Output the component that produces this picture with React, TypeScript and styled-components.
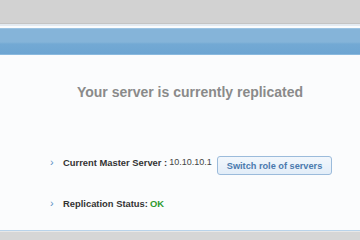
import React from 'react';
import styled, { createGlobalStyle } from 'styled-components';

const Global = createGlobalStyle`
  html, body {
    margin: 0;
    padding: 0;
    background: #d2d2d2;
    font-family: "Liberation Sans", Arial, sans-serif;
  }
`;

const Page = styled.div`
  width: 360px;
  height: 240px;
  display: flex;
  flex-direction: column;
  background: #d2d2d2;
  overflow: hidden;
`;

const TopBar = styled.div`
  height: 23px;
  background: #d2d2d2;
  border-bottom: 1px solid #c4c4c4;
`;

const Panel = styled.section`
  background: #fbfcfd;
  border-top: 2px solid #e3eaf1;
  border-bottom: 1px solid #b9d3ea;
`;

const Header = styled.div`
  height: 25px;
  margin-top: 2px;
  border-top: 1px solid #9cc3e2;
  background: linear-gradient(180deg, #85b4d9 0%, #85b4d9 52%, #73a9d4 60%, #6da5d2 100%);
  border-bottom: 1px solid #8ab9de;
`;

const Body = styled.div`
  height: 175px;
  display: flex;
  flex-direction: column;
`;

const Title = styled.h2`
  margin: 29px 0 0;
  text-align: center;
  font-size: 14px;
  font-weight: bold;
  color: #8a8a8a;
  padding-left: 20px;
`;

const List = styled.ul`
  list-style: none;
  margin: 53px 0 0;
  padding: 0 0 0 50px;
  display: flex;
  flex-direction: column;
  gap: 23px;
`;

const Item = styled.li`
  display: flex;
  align-items: center;
  font-size: 9.4px;
  color: #333;
  height: 18px;
`;

const Arrow = styled.span`
  color: #5a8fc4;
  font-size: 11px;
  width: 13px;
`;

const Label = styled.b`
  color: #333;
  margin-right: 2px;
`;

const Value = styled.span<{ $ok?: boolean }>`
  color: ${p => (p.$ok ? '#2e9a2e' : '#444')};
  font-weight: ${p => (p.$ok ? 'bold' : 'normal')};
  font-size: ${p => (p.$ok ? '9.4px' : '9px')};
`;

const Button = styled.button`
  margin-left: 5px;
  height: 19px;
  padding: 0 9px;
  font-family: inherit;
  font-size: 9.2px;
  font-weight: bold;
  color: #4a7aae;
  background: linear-gradient(180deg, #f2f7fc 0%, #e2edf8 100%);
  border: 1px solid #9bbbdb;
  border-radius: 3px;
  align-self: flex-start;
  margin-top: 3px;
`;

const Bottom = styled.div`
  flex: 1;
  background: #d6d6d6;
  border-top: 1px solid #e8e8e8;
`;

export default function App() {
  return (
    <Page>
      <Global />
      <TopBar />
      <Panel>
        <Header />
        <Body>
          <Title>Your server is currently replicated</Title>
          <List>
            <Item>
              <Arrow>›</Arrow>
              <Label>Current Master Server :</Label>
              <Value>10.10.10.1</Value>
              <Button>Switch role of servers</Button>
            </Item>
            <Item>
              <Arrow>›</Arrow>
              <Label>Replication Status:</Label>
              <Value $ok>OK</Value>
            </Item>
          </List>
        </Body>
      </Panel>
      <Bottom />
    </Page>
  );
}
